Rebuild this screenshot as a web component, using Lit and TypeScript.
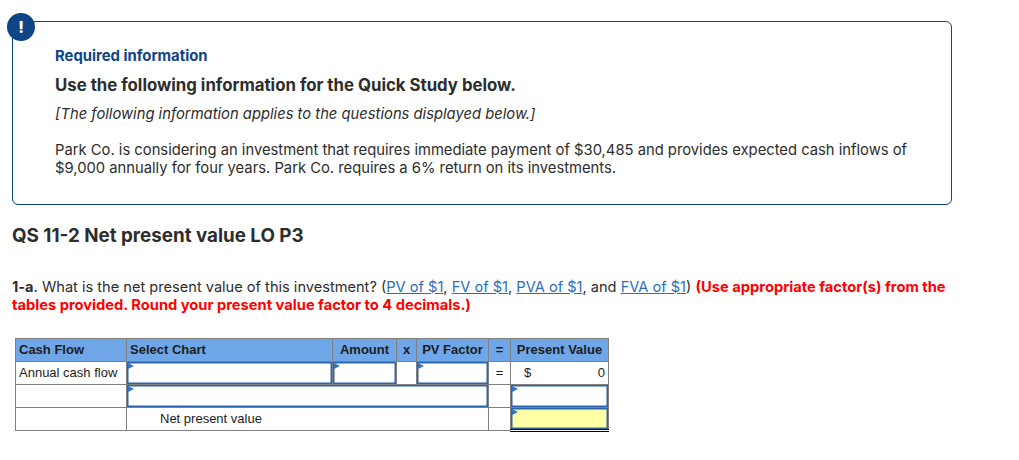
import { LitElement, html, css } from 'lit';
import { customElement } from 'lit/decorators.js';

@customElement('app-root')
export class AppRoot extends LitElement {
  static styles = css`
    :host {
      display: block;
      padding: 21px 0 0 12px;
      font-family: 'Inter', 'Liberation Sans', sans-serif;
      color: #2d2d2d;
      background: #fff;
    }

    /* Caixa de informação */
    .notice {
      position: relative;
      box-sizing: border-box;
      width: 940px;
      height: 184px;
      border: 1px solid #0d4587;
      border-radius: 6px;
      padding: 24px 42px 0;
      font-size: 14.77px;
    }
    .badge {
      position: absolute;
      left: -6px;
      top: -9px;
      width: 28px;
      height: 28px;
      border-radius: 50%;
      background: #0d4587;
      color: #fff;
      font-weight: 800;
      font-size: 16px;
      line-height: 28px;
      text-align: center;
    }
    .req {
      color: #0d4587;
      font-weight: 700;
      font-size: 14.85px;
      line-height: 20px;
    }
    .use {
      margin-top: 9px;
      font-weight: 700;
      font-size: 16.8px;
      line-height: 20px;
    }
    .note {
      margin-top: 9px;
      font-style: italic;
      line-height: 20px;
    }
    .body {
      margin-top: 17px;
      line-height: 18px;
    }

    h2 {
      margin: 20px 0 0;
      font-size: 18.8px;
      line-height: 22px;
      font-weight: 700;
    }

    .question {
      margin: 31px 0 0;
      width: 940px;
      font-size: 14.6px;
      line-height: 18px;
    }
    .question a {
      color: #2a6ebb;
      text-decoration: underline;
    }
    .question b {
      font-weight: 700;
    }
    .red {
      color: #f00;
      font-weight: 700;
      font-size: 14.7px;
    }

    /* Tabela */
    table {
      margin: 24px 0 0 3px;
      border-collapse: collapse;
      table-layout: fixed;
      width: 593px;
      font-family: 'Liberation Sans', Arial, sans-serif;
      font-size: 13px;
      color: #1c1c1c;
    }
    th, td {
      border: 1px solid #808080;
      height: 23px;
      padding: 0 0 2px;
      box-sizing: border-box;
    }
    th {
      background: #6ea6e8;
      font-weight: 700;
      text-align: center;
      white-space: nowrap;
    }
    .left {
      text-align: left;
      padding-left: 3px;
    }
    .center {
      text-align: center;
    }
    .net {
      padding-left: 33px;
    }
    .money {
      display: flex;
      justify-content: space-between;
      padding: 0 3px 0 13px;
    }
    .field {
      position: relative;
      padding: 0;
    }
    .input {
      display: block;
      box-sizing: border-box;
      height: 22px;
      border: 1px solid #2a65ad;
      background: #fff;
      box-shadow: inset 0 0 0 0.5px #2a65ad;
    }
    .input::before {
      content: '';
      position: absolute;
      left: 1px;
      top: 1px;
      border-left: 6px solid #2f74c8;
      border-top: 3.5px solid transparent;
      border-bottom: 3.5px solid transparent;
    }
    .total {
      height: 21px;
      background: #ffffa6;
    }
    td.grand {
      border-top: 1px solid #000;
      border-bottom: 3px double #000;
    }
  `;

  render() {
    return html`
      <section class="notice">
        <div class="badge">!</div>
        <div class="req">Required information</div>
        <div class="use">Use the following information for the Quick Study below.</div>
        <div class="note">[The following information applies to the questions displayed below.]</div>
        <div class="body">
          Park Co. is considering an investment that requires immediate payment of $30,485 and provides expected cash inflows of<br />
          $9,000 annually for four years. Park Co. requires a 6% return on its investments.
        </div>
      </section>

      <h2>QS 11-2 Net present value LO P3</h2>

      <p class="question">
        <b>1-a</b>. What is the net present value of this investment? (<a href="#">PV of $1</a>,
        <a href="#">FV of $1</a>, <a href="#">PVA of $1</a>, and <a href="#">FVA of $1</a>)
        <span class="red">(Use appropriate factor(s) from the</span><br />
        <span class="red">tables provided. Round your present value factor to 4 decimals.)</span>
      </p>

      <table>
        <colgroup>
          <col style="width:111px" />
          <col style="width:206px" />
          <col style="width:64px" />
          <col style="width:20px" />
          <col style="width:72px" />
          <col style="width:22px" />
          <col style="width:98px" />
        </colgroup>
        <tr>
          <th class="left">Cash Flow</th>
          <th class="left">Select Chart</th>
          <th>Amount</th>
          <th>x</th>
          <th>PV Factor</th>
          <th>=</th>
          <th>Present Value</th>
        </tr>
        <tr>
          <td class="left">Annual cash flow</td>
          <td class="field"><span class="input"></span></td>
          <td class="field"><span class="input"></span></td>
          <td></td>
          <td class="field"><span class="input"></span></td>
          <td class="center">=</td>
          <td><div class="money"><span>$</span><span>0</span></div></td>
        </tr>
        <tr>
          <td></td>
          <td class="field" colspan="4"><span class="input"></span></td>
          <td></td>
          <td class="field"><span class="input"></span></td>
        </tr>
        <tr>
          <td></td>
          <td class="net" colspan="4">Net present value</td>
          <td></td>
          <td class="field grand"><span class="input total"></span></td>
        </tr>
      </table>
    `;
  }
}
